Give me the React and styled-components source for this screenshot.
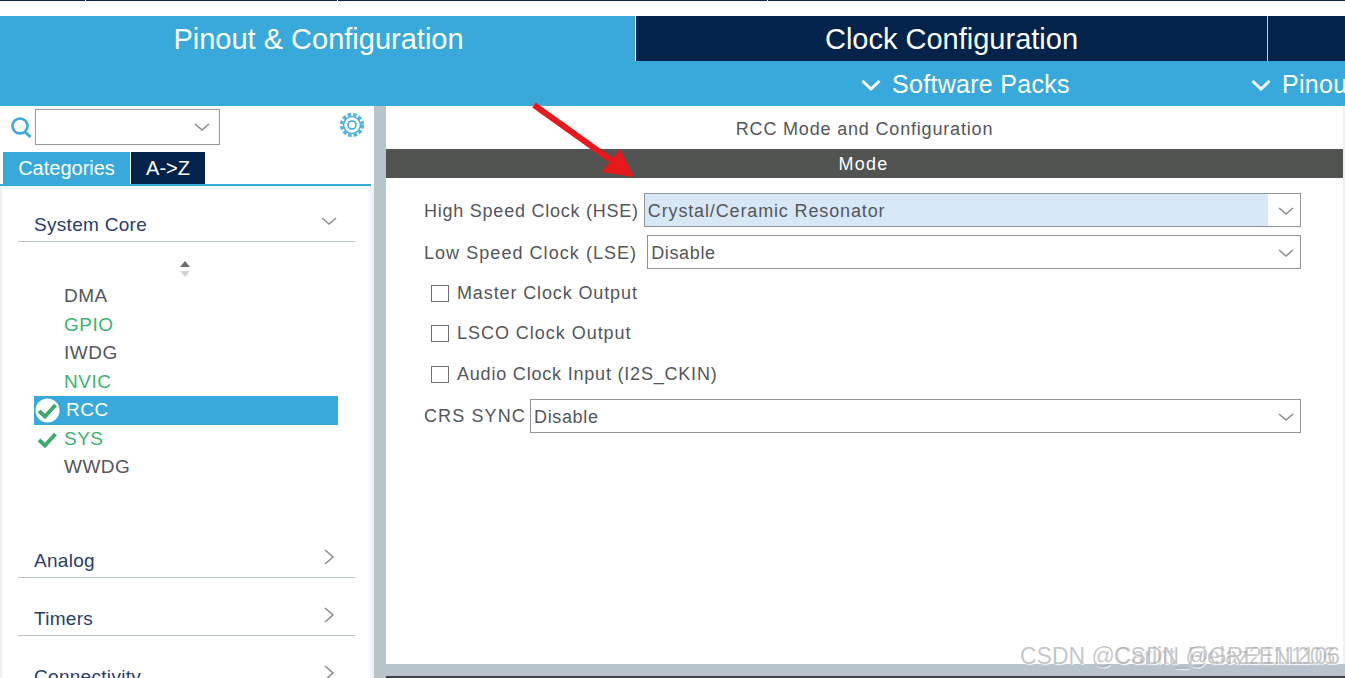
import React from 'react';
import styled, { createGlobalStyle } from 'styled-components';

const GlobalStyle = createGlobalStyle`
  html, body { margin: 0; padding: 0; height: 100%; overflow: hidden; background: #fff; }
  body { font-family: "Liberation Sans", Arial, sans-serif; }
`;

const BLUE = '#39a9dc';
const NAVY = '#03234b';

const Page = styled.div`
  position: relative;
  width: 1345px;
  height: 678px;
  overflow: hidden;
  display: flex;
  flex-direction: column;
`;

const TopStrip = styled.div`
  height: 16px;
  flex: none;
  display: flex;
  gap: 1px;
`;

const TopSeg = styled.div`
  width: ${p => p.$w}px;
  flex: ${p => (p.$w ? 'none' : 1)};
  height: 1px;
  background: ${NAVY};
`;

const TabRow = styled.div`
  display: flex;
  height: 45px;
  flex: none;
`;

const MainTab = styled.div`
  width: ${p => p.$w}px;
  flex: ${p => (p.$w ? 'none' : 1)};
  background: ${p => (p.$active ? BLUE : NAVY)};
  border-right: ${p => (p.$w ? 1 : 0)}px solid ${p => (p.$active ? '#fff' : '#c4ccd4')};
  padding-left: ${p => (p.$active ? 2 : 0)}px;
  color: #fff;
  font-size: 29px;
  line-height: 46px;
  text-align: center;
  box-sizing: border-box;
`;

const SubBar = styled.div`
  height: 45px;
  flex: none;
  background: ${BLUE};
  position: relative;
  overflow: hidden;
`;

const PackMenu = styled.div`
  position: absolute;
  left: ${p => p.$x}px;
  top: 0;
  display: flex;
  align-items: center;
  gap: 11px;
  height: 47px;
  color: #fff;
  font-size: 25px;
  letter-spacing: 0.3px;
  white-space: nowrap;
`;

const Body = styled.div`
  flex: 1;
  display: flex;
  min-height: 0;
`;

const Sidebar = styled.aside`
  width: 374px;
  flex: none;
  display: flex;
  flex-direction: column;
  overflow: hidden;
`;

const SearchRow = styled.div`
  height: 46px;
  flex: none;
  display: flex;
  align-items: flex-start;
  padding: 3px 9px 0 10px;
  box-sizing: border-box;
`;

const SearchIcon = styled.svg`
  width: 22px;
  height: 24px;
  margin: 7px 3px 0 0;
  flex: none;
`;

const SearchBox = styled.div`
  width: 185px;
  height: 36px;
  box-sizing: border-box;
  border: 1px solid #999;
  display: flex;
  align-items: center;
  justify-content: flex-end;
  padding-right: 9px;
`;

const GearIcon = styled.svg`
  width: 26px;
  height: 26px;
  margin: 3px 0 0 auto;
  flex: none;
`;

const TabsRow = styled.div`
  display: flex;
  height: 32px;
  flex: none;
  padding-left: 3px;
  gap: 1px;
`;

const SideTab = styled.div`
  width: ${p => p.$w}px;
  background: ${p => (p.$active ? BLUE : NAVY)};
  color: #fff;
  font-size: 20px;
  line-height: 32px;
  text-align: center;
`;

const TabRule = styled.div`
  height: 2px;
  flex: none;
  width: 371px;
  background: ${BLUE};
`;

const TreeFrame = styled.div`
  flex: 1;
  background: #eff1f3;
  padding: 1px 4px 0 2px;
  min-height: 0;
`;

const Tree = styled.div`
  background: #fff;
  height: 100%;
  padding: 0 15px 0 16px;
  box-sizing: border-box;
  overflow: hidden;
`;

const Category = styled.div`
  height: ${p => p.$h}px;
  box-sizing: border-box;
  display: flex;
  align-items: flex-end;
  justify-content: space-between;
  border-bottom: 1px solid #b9c4cc;
  color: #2a3c6e;
  font-size: 19px;
  letter-spacing: 0.3px;
  padding: 0 0 5px 16px;
`;

const CategoryIcon = styled.svg`
  width: 16px;
  height: 16px;
  margin: 0 18px ${p => p.$lift}px 0;
`;

const Sorter = styled.svg`
  display: block;
  width: 14px;
  height: 16px;
  margin: 19px 0 5px 160px;
`;

const PeripheralList = styled.div`
  display: flex;
  flex-direction: column;
  width: 304px;
  margin: 0 0 38px 16px;
`;

const Peripheral = styled.div`
  height: 28.5px;
  display: flex;
  align-items: center;
  padding-left: ${p => (p.$selected ? 32 : 30)}px;
  position: relative;
  font-size: 19px;
  letter-spacing: 0.5px;
  color: ${p => (p.$selected ? '#fff' : p.$ok ? '#3cb371' : '#54565a')};
  background: ${p => (p.$selected ? BLUE : 'transparent')};
`;

const StatusIcon = styled.svg`
  position: absolute;
  left: 1px;
  top: 2px;
  width: 25px;
  height: 25px;
`;

const VSplit = styled.div`
  width: 12px;
  flex: none;
  background: #b8c4cc;
`;

const RightWrap = styled.div`
  flex: 1;
  display: flex;
  flex-direction: column;
  min-width: 0;
`;

const Content = styled.main`
  flex: 1;
  min-height: 0;
  background: #fff;
  border-right: 2px solid #eff1f3;
  display: flex;
  flex-direction: column;
`;

const PanelTitle = styled.div`
  height: 43px;
  flex: none;
  color: #54565a;
  font-size: 18px;
  letter-spacing: 0.82px;
  line-height: 46px;
  text-align: center;
`;

const ModeBar = styled.div`
  height: 29px;
  flex: none;
  background: #525452;
  color: #fff;
  font-size: 18px;
  letter-spacing: 1.3px;
  line-height: 30px;
  text-align: center;
  padding-right: 2px;
`;

const Form = styled.div`
  padding: 15px 42px 0 38px;
  display: flex;
  flex-direction: column;
`;

const FieldRow = styled.div`
  display: flex;
  align-items: center;
  height: 34px;
  margin-bottom: ${p => p.$mb || 0}px;
  gap: ${p => p.$gap}px;
`;

const Label = styled.span`
  color: #54565a;
  font-size: 18px;
  letter-spacing: ${p => p.$ls}px;
  white-space: nowrap;
`;

const FieldLabel = styled(Label)`
  padding-top: 2px;
`;

const Select = styled.div`
  flex: 1;
  height: 34px;
  box-sizing: border-box;
  border: 1px solid #8f9498;
  display: flex;
  align-items: stretch;
`;

const SelectValue = styled.div`
  flex: 1;
  padding-left: 3px;
  background: ${p => (p.$highlight ? '#d7e7f5' : '#fff')};
  color: #54565a;
  font-size: 18px;
  letter-spacing: ${p => (p.$highlight ? 0.86 : 0.65)}px;
  line-height: 34px;
`;

const SelectArrow = styled.div`
  width: 32px;
  flex: none;
  box-sizing: border-box;
  padding: 2px 0 0 4px;
  display: flex;
  align-items: center;
  justify-content: center;
`;

const CheckList = styled.div`
  margin: 4px 0;
  display: flex;
  flex-direction: column;
`;

const CheckRow = styled.label`
  display: flex;
  align-items: center;
  gap: 8px;
  height: 40.5px;
  padding-left: 7px;
`;

const CheckBox = styled.span`
  width: 16px;
  height: 15px;
  border: 1.5px solid #6e7073;
  background: #fff;
  flex: none;
`;

const HSplit = styled.div`
  height: 12px;
  flex: none;
  background: #b8c4cc;
`;

const BottomEdge = styled.div`
  height: 2px;
  flex: none;
  background: #3f4347;
`;

const Arrow = styled.svg`
  position: absolute;
  left: 528px;
  top: 100px;
  width: 112px;
  height: 82px;
  pointer-events: none;
`;

const Watermark = styled.div`
  position: absolute;
  left: ${p => p.$x}px;
  top: 641px;
  font-size: 23px;
  line-height: 30px;
  white-space: nowrap;
  color: rgba(150, 150, 150, 0.55);
  text-shadow: 1px 1px 1px rgba(255, 255, 255, 0.8);
  pointer-events: none;
`;

const Chevron = ({ color = '#8a8d90', size = 16 }) => (
  <svg width={size} height={size} viewBox="0 0 16 16" fill="none">
    <path d="M1 5 L8 11 L15 5" stroke={color} strokeWidth="1.6" />
  </svg>
);

const HeavyChevron = () => (
  <svg width="20" height="14" viewBox="0 0 20 14" fill="none">
    <path d="M1.5 3 L10 11 L18.5 3" stroke="#fff" strokeWidth="3" />
  </svg>
);

const CheckMark = ({ circle }) => (
  <StatusIcon viewBox="0 0 25 25">
    {circle && <circle cx="12.5" cy="12.5" r="12" fill="#fff" />}
    <path d="M4 13 L10 18.5 L20.5 7" fill="none" stroke="#3fa96c" strokeWidth="4" />
  </StatusIcon>
);

const Gear = () => (
  <GearIcon viewBox="0 0 26 26" fill="none">
    <circle cx="13" cy="13" r="10.5" stroke={BLUE} strokeWidth="3.4" strokeDasharray="3.6 2" opacity="0.85" />
    <circle cx="13" cy="13" r="8.4" stroke={BLUE} strokeWidth="1.4" />
    <circle cx="13" cy="13" r="4" stroke={BLUE} strokeWidth="1.6" />
  </GearIcon>
);

const peripherals = [
  { name: 'DMA' },
  { name: 'GPIO', ok: true },
  { name: 'IWDG' },
  { name: 'NVIC', ok: true },
  { name: 'RCC', selected: true, mark: 'circle' },
  { name: 'SYS', ok: true, mark: 'plain' },
  { name: 'WWDG' },
];

const closedCategories = ['Analog', 'Timers', 'Connectivity'];

const checks = [
  { label: 'Master Clock Output', ls: 0.88 },
  { label: 'LSCO Clock Output', ls: 0.97 },
  { label: 'Audio Clock Input (I2S_CKIN)', ls: 0.8 },
];

export default function App() {
  return (
    <Page>
      <GlobalStyle />
      <TopStrip>
        <TopSeg $w={85} />
        <TopSeg $w={251} />
        <TopSeg $w={429} />
        <TopSeg />
      </TopStrip>
      <TabRow>
        <MainTab $active $w={636}>Pinout &amp; Configuration</MainTab>
        <MainTab $w={632}>Clock Configuration</MainTab>
        <MainTab />
      </TabRow>
      <SubBar>
        <PackMenu $x={861}><HeavyChevron />Software Packs</PackMenu>
        <PackMenu $x={1251}><HeavyChevron />Pinout</PackMenu>
      </SubBar>
      <Body>
        <Sidebar>
          <SearchRow>
            <SearchIcon viewBox="0 0 22 24" fill="none">
              <circle cx="10" cy="10" r="7.5" stroke={BLUE} strokeWidth="2.6" />
              <path d="M15 16 L20.5 21" stroke={BLUE} strokeWidth="3" />
            </SearchIcon>
            <SearchBox><Chevron /></SearchBox>
            <Gear />
          </SearchRow>
          <TabsRow>
            <SideTab $active $w={127}>Categories</SideTab>
            <SideTab $w={74}>A-&gt;Z</SideTab>
          </TabsRow>
          <TabRule />
          <TreeFrame>
            <Tree>
              <Category $h={55}>
                System Core
                <CategoryIcon $lift={7} viewBox="0 0 16 16" fill="none">
                  <path d="M1 5 L8 11 L15 5" stroke="#8a8d90" strokeWidth="1.6" />
                </CategoryIcon>
              </Category>
              <Sorter viewBox="0 0 14 16">
                <path d="M7 0 L12 6 H2 Z" fill="#6a6c6e" />
                <path d="M7 16 L12 10 H2 Z" fill="#cfd1d3" />
              </Sorter>
              <PeripheralList>
                {peripherals.map(p => (
                  <Peripheral key={p.name} $ok={p.ok} $selected={p.selected}>
                    {p.mark && <CheckMark circle={p.mark === 'circle'} />}
                    {p.name}
                  </Peripheral>
                ))}
              </PeripheralList>
              {closedCategories.map(name => (
                <Category key={name} $h={58}>
                  {name}
                  <CategoryIcon $lift={7} viewBox="0 0 16 16" fill="none">
                    <path d="M4 1 L12 8 L4 15" stroke="#8a8d90" strokeWidth="1.6" />
                  </CategoryIcon>
                </Category>
              ))}
            </Tree>
          </TreeFrame>
        </Sidebar>
        <VSplit />
        <RightWrap>
          <Content>
            <PanelTitle>RCC Mode and Configuration</PanelTitle>
            <ModeBar>Mode</ModeBar>
            <Form>
              <FieldRow $mb={8} $gap={5}>
                <FieldLabel $ls={0.76}>High Speed Clock (HSE)</FieldLabel>
                <Select>
                  <SelectValue $highlight>Crystal/Ceramic Resonator</SelectValue>
                  <SelectArrow><Chevron /></SelectArrow>
                </Select>
              </FieldRow>
              <FieldRow $gap={10}>
                <FieldLabel $ls={1.05}>Low Speed Clock (LSE)</FieldLabel>
                <Select>
                  <SelectValue>Disable</SelectValue>
                  <SelectArrow><Chevron /></SelectArrow>
                </Select>
              </FieldRow>
              <CheckList>
                {checks.map(c => (
                  <CheckRow key={c.label}>
                    <CheckBox />
                    <Label $ls={c.ls}>{c.label}</Label>
                  </CheckRow>
                ))}
              </CheckList>
              <FieldRow $gap={4}>
                <FieldLabel $ls={1.12}>CRS SYNC</FieldLabel>
                <Select>
                  <SelectValue>Disable</SelectValue>
                  <SelectArrow><Chevron /></SelectArrow>
                </Select>
              </FieldRow>
            </Form>
          </Content>
          <HSplit />
          <BottomEdge />
        </RightWrap>
      </Body>
      <Arrow viewBox="0 0 112 82">
        <path d="M6 5 L83 60" stroke="#e8191c" strokeWidth="6" />
        <path d="M106 77 L74 72 L92 49 Z" fill="#e8191c" />
      </Arrow>
      <Watermark $x={1020}>CSDN @Carlitt_Fielaz2111206</Watermark>
      <Watermark $x={1114}>CSDN @GREEN1106</Watermark>
    </Page>
  );
}
